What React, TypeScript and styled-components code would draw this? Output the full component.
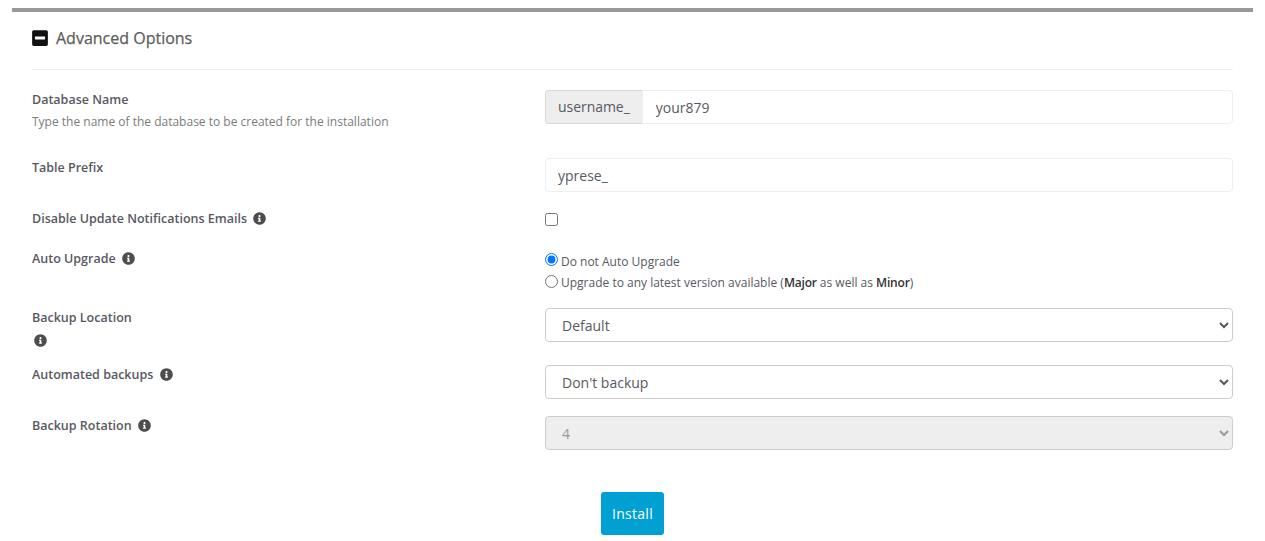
import styled, { createGlobalStyle } from "styled-components";
import { FaInfoCircle, FaMinusSquare } from "react-icons/fa";

const GlobalStyle = createGlobalStyle`
  html, body {
    margin: 0;
    background: #fff;
  }

  body {
    font-family: "Open Sans", "Liberation Sans", sans-serif;
    color: #575962;
  }
`;

const Page = styled.main`
  margin: 8px 12px 0;
  padding: 0 20px 6px;
  border-top: 4px solid #999;
`;

const SectionHeader = styled.header`
  display: flex;
  align-items: center;
  gap: 8px;
  box-sizing: border-box;
  height: 58px;
  padding-bottom: 6px;
  border-bottom: 1px solid #eee;
  margin-bottom: 20px;
`;

const SectionTitle = styled.h2`
  margin: 0;
  font-size: 16px;
  font-weight: 500;
  color: #5c5c5c;
  -webkit-text-stroke: 0.25px #5c5c5c;
`;

const MinusIcon = styled(FaMinusSquare)`
  width: 16px;
  height: 18px;
  color: #111;
`;

const Row = styled.div<{ $height: number; $gap: number }>`
  display: grid;
  grid-template-columns: 513px 1fr;
  height: ${(p) => p.$height}px;
  margin-bottom: ${(p) => p.$gap}px;
`;

const LabelCell = styled.div<{ $top?: number }>`
  padding-top: ${(p) => p.$top ?? 0}px;
`;

const Label = styled.label`
  display: block;
  font-size: 12.5px;
  line-height: 18px;
  font-weight: 600;
  color: #575962;
`;

const Hint = styled.span`
  display: block;
  font-size: 12px;
  line-height: 18px;
  margin-top: 4px;
  color: #7b7b7b;
`;

const InfoIcon = styled(FaInfoCircle)`
  width: 13px;
  height: 13px;
  color: #4d4d4d;
  vertical-align: -2px;
  margin-left: 3px;
`;

const IconLine = styled.div`
  line-height: 18px;
  margin: 5px 0 0 -1px;
  font-size: 12px;
`;

const InputGroup = styled.div`
  display: flex;
  height: 34px;
`;

const Addon = styled.span`
  display: flex;
  align-items: center;
  box-sizing: border-box;
  padding: 0 12px 2px 12px;
  font-size: 14px;
  letter-spacing: -0.05px;
  color: #575962;
  background: #eee;
  border: 1px solid #d8d8d8;
  border-right: 0;
  border-radius: 4px 0 0 4px;
`;

const TextInput = styled.input<{ $joined?: boolean }>`
  flex: 1;
  width: 100%;
  height: 34px;
  box-sizing: border-box;
  padding: 0 12px 0 ${(p) => (p.$joined ? 13 : 12)}px;
  font-family: inherit;
  font-size: 14px;
  color: #575962;
  background: #fff;
  border: 1px solid #eee;
  border-radius: ${(p) => (p.$joined ? "0 4px 4px 0" : "4px")};
  outline: none;
`;

const CheckBox = styled.input`
  display: block;
  width: 13px;
  height: 13px;
  margin: 3px 0 0;
`;

const RadioGroup = styled.div`
  padding-top: 1px;
`;

const RadioLine = styled.label`
  display: flex;
  align-items: flex-start;
  height: 21px;
  line-height: 21px;
  font-size: 12px;
  color: #575962;

  strong {
    font-weight: 600;
    letter-spacing: -0.2px;
    color: #333;
  }
`;

const Radio = styled.input<{ $top: number }>`
  flex: none;
  width: 13px;
  height: 13px;
  margin: ${(p) => p.$top}px 3px 0 0;
`;

const Select = styled.select`
  display: block;
  width: 100%;
  height: 34px;
  box-sizing: border-box;
  padding: 0 12px;
  font-family: inherit;
  font-size: 14px;
  color: #575962;
  background-color: #fff;
  border: 1px solid #ccc;
  border-radius: 4px;
  outline: none;

  &:disabled {
    background-color: #eee;
    color: #999;
    opacity: 1;
  }
`;

const Actions = styled.div`
  display: flex;
  padding-left: 569px;
  margin-top: 42px;
`;

const InstallButton = styled.button`
  width: 63px;
  height: 43px;
  padding: 0;
  font-family: inherit;
  font-size: 14px;
  letter-spacing: 0.3px;
  color: #fff;
  background: #00a0d2;
  border: 0;
  border-radius: 3px;
`;

function App() {
  return (
    <>
      <GlobalStyle />
      <Page>
        <SectionHeader>
          <MinusIcon />
          <SectionTitle>Advanced Options</SectionTitle>
        </SectionHeader>

        <Row $height={34} $gap={34}>
          <LabelCell $top={1}>
            <Label>Database Name</Label>
            <Hint>Type the name of the database to be created for the installation</Hint>
          </LabelCell>
          <InputGroup>
            <Addon>username_</Addon>
            <TextInput $joined defaultValue="your879" />
          </InputGroup>
        </Row>

        <Row $height={34} $gap={18}>
          <LabelCell $top={1}>
            <Label>Table Prefix</Label>
          </LabelCell>
          <TextInput defaultValue="yprese_" />
        </Row>

        <Row $height={21} $gap={19}>
          <LabelCell>
            <Label>
              Disable Update Notifications Emails <InfoIcon />
            </Label>
          </LabelCell>
          <CheckBox type="checkbox" />
        </Row>

        <Row $height={41} $gap={17}>
          <LabelCell>
            <Label>
              Auto Upgrade <InfoIcon />
            </Label>
          </LabelCell>
          <RadioGroup>
            <RadioLine>
              <Radio $top={2} type="radio" name="upgrade" defaultChecked />
              Do not Auto Upgrade
            </RadioLine>
            <RadioLine>
              <Radio $top={3} type="radio" name="upgrade" />
              <span>
                Upgrade to any latest version available (<strong>Major</strong> as well as <strong>Minor</strong>)
              </span>
            </RadioLine>
          </RadioGroup>
        </Row>

        <Row $height={34} $gap={23}>
          <LabelCell $top={1}>
            <Label>Backup Location</Label>
            <IconLine>
              <InfoIcon />
            </IconLine>
          </LabelCell>
          <Select defaultValue="default">
            <option value="default">Default</option>
          </Select>
        </Row>

        <Row $height={34} $gap={17}>
          <LabelCell $top={1}>
            <Label>
              Automated backups <InfoIcon />
            </Label>
          </LabelCell>
          <Select defaultValue="none">
            <option value="none">Don't backup</option>
          </Select>
        </Row>

        <Row $height={34} $gap={0}>
          <LabelCell $top={1}>
            <Label>
              Backup Rotation <InfoIcon />
            </Label>
          </LabelCell>
          <Select disabled defaultValue="4">
            <option value="4">4</option>
          </Select>
        </Row>

        <Actions>
          <InstallButton type="button">Install</InstallButton>
        </Actions>
      </Page>
    </>
  );
}

export default App;
